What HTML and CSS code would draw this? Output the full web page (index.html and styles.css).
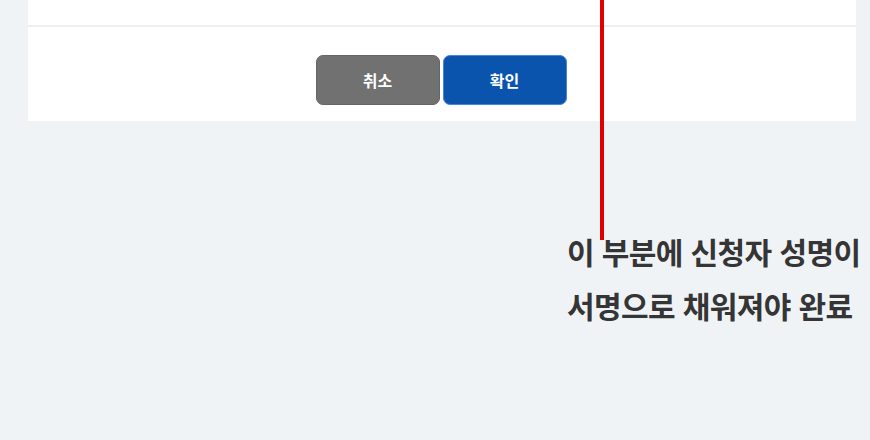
FILE: index.html
```html
<!DOCTYPE html>
<html lang="ko">
<head>
<meta charset="utf-8">
<link rel="stylesheet" href="styles.css">
</head>
<body>
<div class="panel">
  <div class="panel-top"></div>
  <div class="panel-footer">
    <button class="btn btn-cancel">취소</button>
    <button class="btn btn-confirm">확인</button>
  </div>
</div>
<div class="annotation">
  <div class="annotation-line"></div>
  <p class="annotation-text">이 부분에 신청자 성명이<br>서명으로 채워져야 완료</p>
</div>
</body>
</html>
```
FILE: styles.css
```css
html, body {
  margin: 0;
  padding: 0;
}
body {
  background: #eff3f6;
  width: 870px;
  height: 440px;
  overflow: hidden;
  position: relative;
  font-family: "Noto Sans CJK KR", "Noto Sans", sans-serif;
}
.panel {
  margin-left: 28px;
  width: 828px;
  background: #ffffff;
}
.panel-top {
  height: 25px;
  border-bottom: 2px solid #eeeff0;
}
.panel-footer {
  display: flex;
  justify-content: center;
  gap: 3px;
  padding: 28px 2px 16px 0;
}
.btn {
  width: 124px;
  height: 50px;
  border-radius: 7px;
  color: #ffffff;
  font-family: "Noto Sans CJK KR", sans-serif;
  font-weight: 700;
  font-size: 16px;
  cursor: pointer;
}
.btn-cancel {
  background: #717171;
  border: 1px solid #666666;
}
.btn-confirm {
  background: #0b54ae;
  border: 1px solid #4a86d0;
}
.annotation {
  position: absolute;
  left: 0;
  top: 0;
  width: 870px;
  height: 440px;
  pointer-events: none;
}
.annotation-line {
  position: absolute;
  left: 600px;
  top: 0;
  width: 4px;
  height: 240px;
  background: #e10000;
}
.annotation-text {
  position: absolute;
  left: 567px;
  top: 224px;
  margin: 0;
  font-size: 30px;
  line-height: 54px;
  letter-spacing: -0.6px;
  font-weight: 700;
  color: #353535;
  white-space: nowrap;
}
```
